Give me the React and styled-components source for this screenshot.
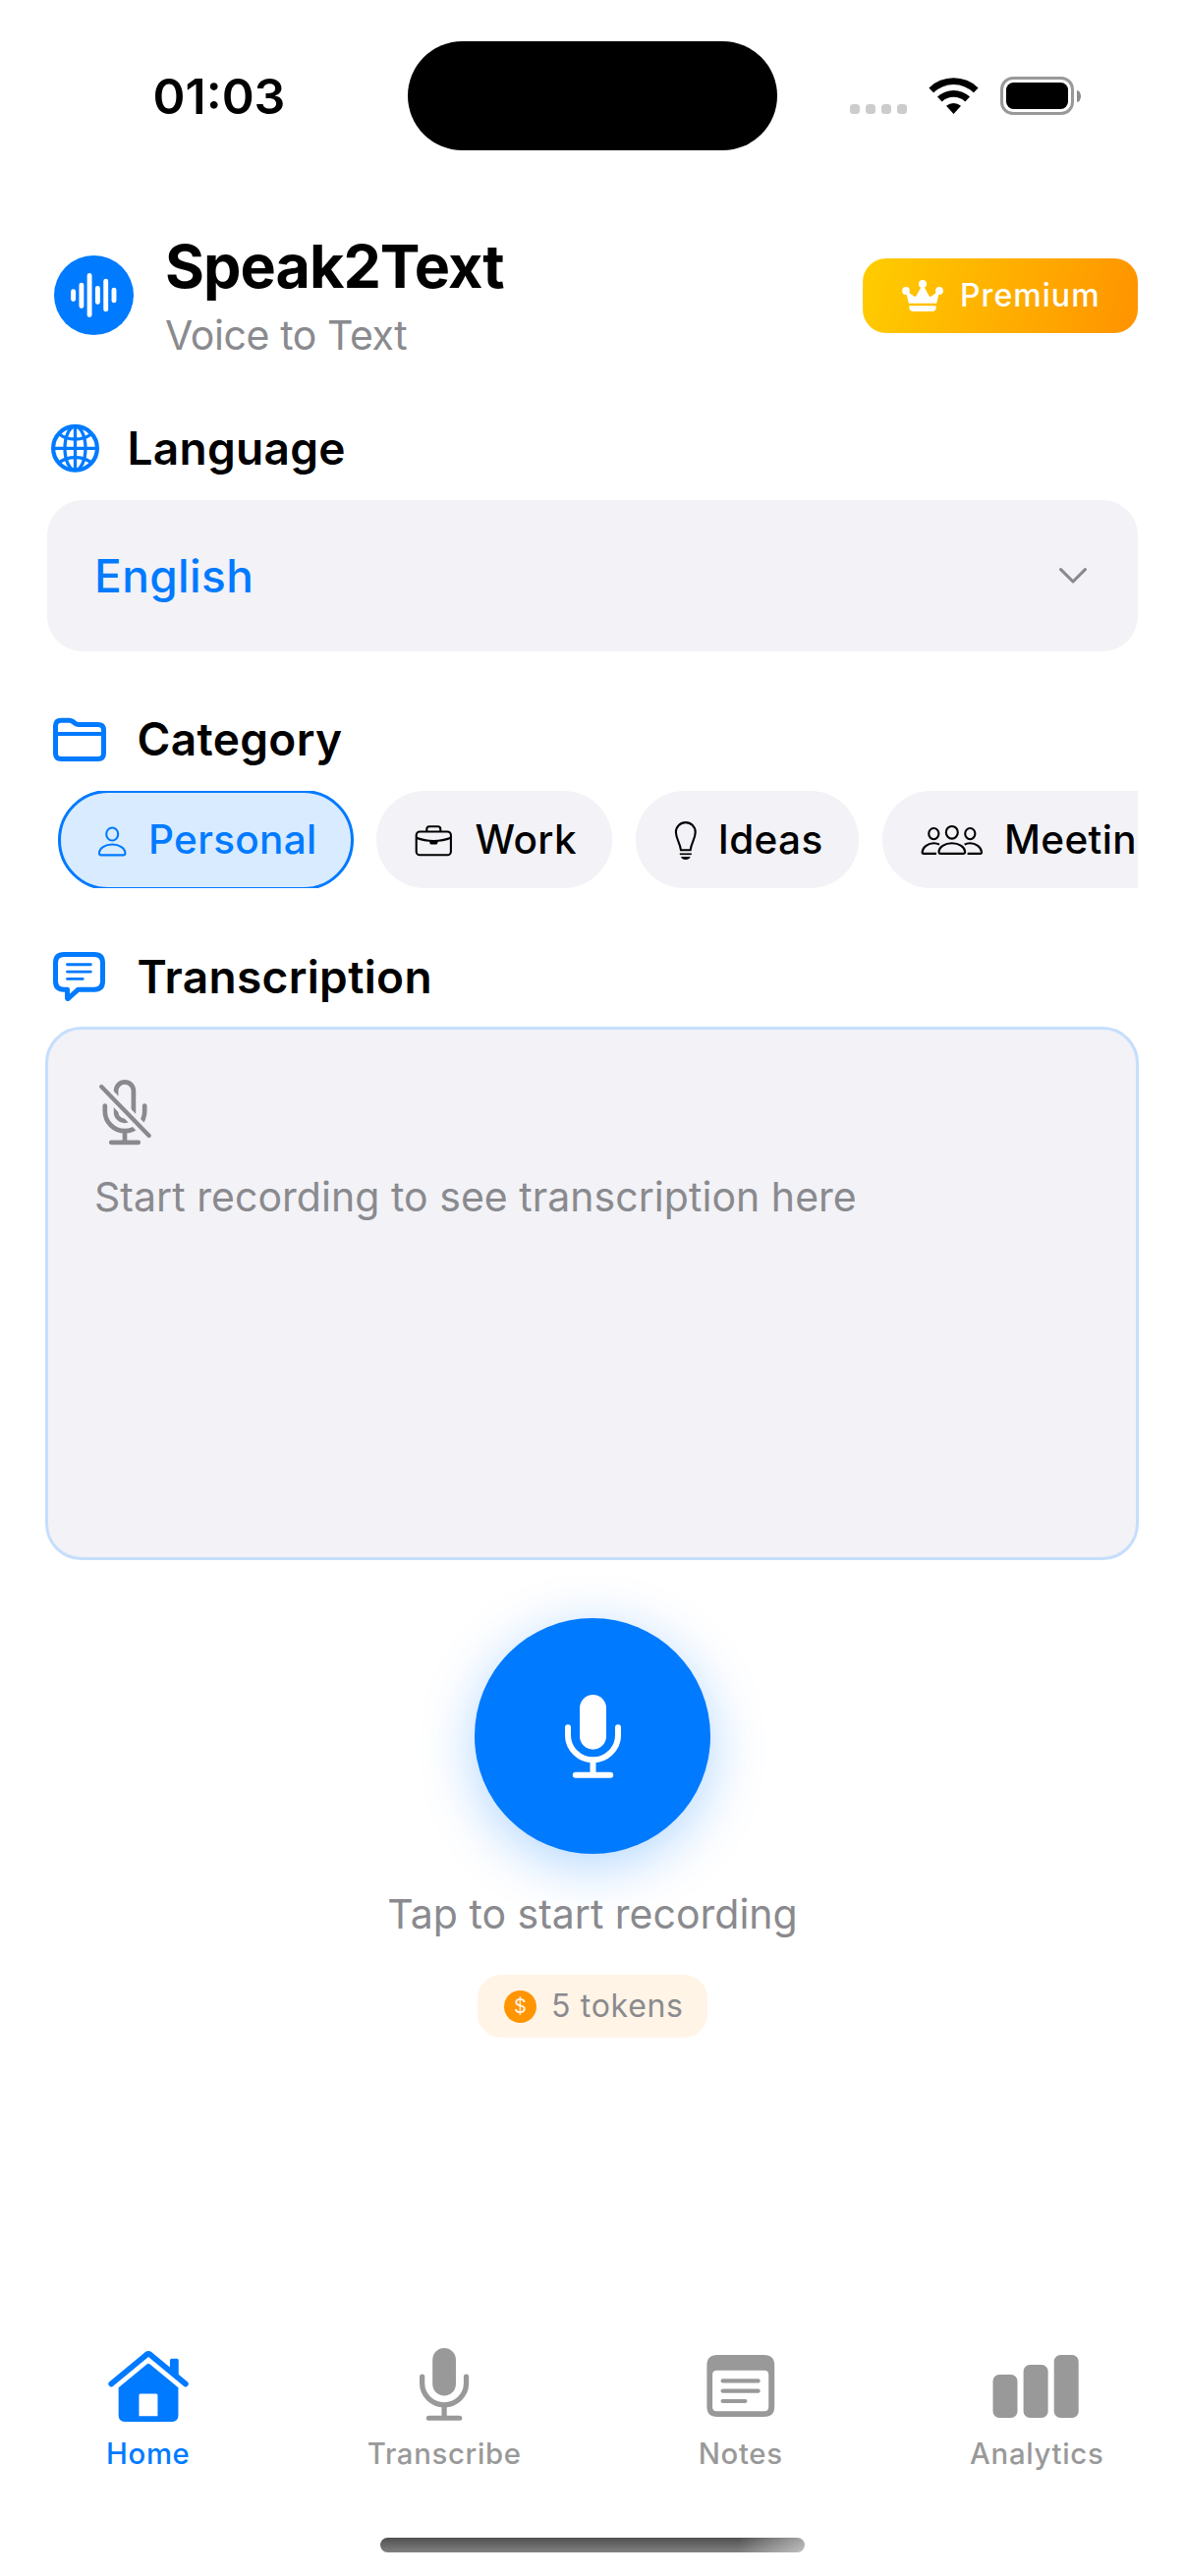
import React from "react";
import styled, { createGlobalStyle, css } from "styled-components";

const color = {
  blue: "#007AFF",
  ink: "#000",
  gray: "#8A8A8E",
  tabGray: "#999999",
  fill: "#F2F2F7",
  orange: "#FF9500",
};

const GlobalStyle = createGlobalStyle`
  *, *::before, *::after { box-sizing: border-box; }
  body { margin: 0; background: #fff; }
  svg { display: block; flex: none; }
`;

const Screen = styled.div`
  width: 1206px;
  height: 2622px;
  display: flex;
  flex-direction: column;
  overflow: hidden;
  background: #fff;
  color: ${color.ink};
  font-family: Inter, "Liberation Sans", sans-serif;
`;

const Text = styled.span`
  display: block;
  margin: 0;
  white-space: nowrap;
  font-size: ${(p) => p.$size}px;
  font-weight: ${(p) => p.$weight || 400};
  line-height: ${(p) => p.$line || 50}px;
  letter-spacing: ${(p) => p.$track || 0}px;
  color: ${(p) => p.$color || "inherit"};
`;

/* Status bar */
const StatusBar = styled.header`
  height: 194px;
  display: grid;
  grid-template-columns: 415px 376px 415px;
  align-items: center;
`;
const Clock = styled.div`
  display: flex;
  justify-content: center;
  padding: 2px 0 0 31px;
`;
const Island = styled.div`
  height: 111px;
  border-radius: 56px;
  background: #000;
`;
const StatusIcons = styled.div`
  display: flex;
  align-items: center;
  padding: 1px 0 0 74px;
`;
const SignalDots = styled.div`
  display: flex;
  gap: 6px;
  padding-top: 27px;
`;
const SignalDot = styled.i`
  width: 10px;
  height: 10px;
  border-radius: 3.5px;
  background: #ccc;
`;
const WifiGlyph = styled.svg`
  margin-left: 22px;
`;
const Battery = styled.div`
  display: flex;
  align-items: center;
  gap: 3px;
  margin-left: 22px;
`;
const BatteryShell = styled.div`
  width: 75px;
  height: 39px;
  padding: 3px;
  border: 3px solid #999;
  border-radius: 13px;
`;
const BatteryLevel = styled.div`
  height: 100%;
  border-radius: 7.5px;
  background: #000;
`;
const BatteryNub = styled.i`
  width: 4px;
  height: 12px;
  border-radius: 0 4px 4px 0 / 0 6px 6px 0;
  background: #8c8c8c;
`;

/* Content */
const Content = styled.main`
  padding: 41.5px 48px 0;
`;
const AppHeader = styled.div`
  height: 130px;
  display: flex;
  align-items: center;
  padding-left: 7px;
`;
const AppBadge = styled.div`
  width: 81px;
  height: 81px;
  border-radius: 50%;
  background: ${color.blue};
`;
const Titles = styled.div`
  display: flex;
  flex-direction: column;
  gap: 8.5px;
  margin-left: 32px;
`;
const PremiumButton = styled.button`
  display: flex;
  align-items: center;
  gap: 17.5px;
  width: 280px;
  height: 76px;
  margin-left: auto;
  padding: 0 0 0 39.5px;
  border: 0;
  border-radius: 24px;
  background: linear-gradient(105deg, #ffcc00 2%, #ff9500 96%);
  color: #fff;
  font-family: inherit;
`;

const Section = styled.section`
  display: flex;
  flex-direction: column;
  gap: 24px;
  margin-top: ${(p) => p.$top}px;
`;
const SectionLabel = styled.div`
  display: flex;
  align-items: center;
  gap: 24.5px;
  height: 58px;
  color: ${color.ink};
`;
const Select = styled.div`
  display: flex;
  align-items: center;
  justify-content: space-between;
  height: 154px;
  padding: 0 52px 0 48px;
  border-radius: 36px;
  background: ${color.fill};
`;

const ChipRow = styled.div`
  display: flex;
  gap: 24px;
  height: 99px;
  padding-left: 12px;
  overflow: hidden;
`;
const Chip = styled.div`
  flex: none;
  display: flex;
  align-items: center;
  height: 99px;
  padding: 0 36px;
  border-radius: 50px;
  background: ${color.fill};
  ${(p) =>
    p.$selected &&
    css`
      height: 102px;
      margin: -1.5px;
      border: 3px solid ${color.blue};
      padding: 0 34.5px;
      border-radius: 51px;
      background: #d9ebff;
      color: ${color.blue};
    `}
`;
const ChipIcon = styled.svg`
  margin-right: 18px;
  fill: none;
  stroke: currentColor;
  stroke-width: 2.1;
`;

const TranscriptBox = styled.div`
  display: flex;
  flex-direction: column;
  gap: 24px;
  height: 543px;
  margin: -2px -1px -1px -2px;
  padding: 47px;
  border: 3px solid #c5defc;
  border-radius: 37px;
  background: ${color.fill};
`;

const Recorder = styled.div`
  display: flex;
  flex-direction: column;
  align-items: center;
  gap: 36px;
  margin-top: 60px;
`;
const RecordButton = styled.button`
  display: flex;
  align-items: center;
  justify-content: center;
  width: 240px;
  height: 240px;
  padding: 0;
  border: 0;
  border-radius: 50%;
  background: ${color.blue};
  color: #fff;
  box-shadow: 0 12px 56px rgba(0, 122, 255, 0.31);
`;
const TokenPill = styled.div`
  display: flex;
  align-items: center;
  gap: 15px;
  width: 234px;
  height: 64px;
  margin-top: 1px;
  padding-left: 27px;
  border-radius: 24px;
  background: #fff4e6;
`;
const Coin = styled.div`
  display: flex;
  justify-content: center;
  width: 33px;
  height: 33px;
  border-radius: 50%;
  background: ${color.orange};
  color: #fff4e6;
`;

/* Tab bar */
const TabBar = styled.nav`
  display: grid;
  grid-template-columns: repeat(4, 1fr);
  margin-top: auto;
`;
const Tab = styled.div`
  display: flex;
  flex-direction: column;
  align-items: center;
  gap: 9.5px;
  color: ${(p) => (p.$active ? color.blue : color.tabGray)};
`;
const HomeIndicator = styled.div`
  width: 432px;
  height: 15px;
  margin: 67.5px auto 24px;
  border-radius: 8px;
  background: linear-gradient(100deg, transparent 84%, rgba(255, 255, 255, 0.5) 100%),
    linear-gradient(#505050, #808080);
`;

/* Icons */
const Wifi = () => (
  <WifiGlyph width="51" height="38" viewBox="0 0 51 38">
    <path d="M0.4 10.4 A36 36 0 0 1 50.6 10.4 L45.9 15.2 A29.5 29.5 0 0 0 5.1 15.2 Z" />
    <path d="M9 19.6 A24 24 0 0 1 42 19.6 L37.3 24.4 A17.4 17.4 0 0 0 13.7 24.4 Z" />
    <path d="M18 28.8 A11.4 11.4 0 0 1 33 28.8 L25.5 37 Z" />
  </WifiGlyph>
);

const waveBars = [
  [19.6, 34.3, 47],
  [27.9, 27.7, 54],
  [36.1, 18, 63],
  [44.4, 31, 50],
  [52.7, 23.7, 57.3],
  [61, 32.7, 48.3],
];
const Waveform = () => (
  <svg width="81" height="81" viewBox="0 0 81 81" stroke="#fff" strokeWidth="4.9" strokeLinecap="round">
    {waveBars.map(([x, top, bottom]) => (
      <line key={x} x1={x} x2={x} y1={top + 2.4} y2={bottom - 2.4} />
    ))}
  </svg>
);

const Crown = () => (
  <svg width="42" height="32" viewBox="0 0 42 32" fill="currentColor">
    <circle cx="21" cy="4.1" r="4" />
    <circle cx="4" cy="11" r="3.9" />
    <circle cx="38" cy="11" r="3.9" />
    <path d="M4.2 13 L6.5 12.5 L12.5 16.8 Q13.6 17.4 14.4 16.2 L19.2 7.5 H22.8 L27.6 16.2 Q28.4 17.4 29.5 16.8 L35.5 12.5 L37.8 13 L35.2 23.7 H6.8 Z" />
    <path d="M7.3 26.2 H34.7 V27.5 Q34.7 32 30.5 32 H11.5 Q7.3 32 7.3 27.5 Z" />
  </svg>
);

const Globe = () => (
  <svg width="57" height="58" viewBox="0 0 57 58" fill="none" stroke={color.blue} strokeWidth="3.3">
    <circle cx="28.5" cy="29.3" r="22.4" strokeWidth="4.2" />
    <ellipse cx="28.5" cy="29.3" rx="10.5" ry="22.2" />
    <path d="M28.5 7 V51.6 M6.2 29.3 H50.8" />
    <path d="M12.3 15 Q19 20 28.5 20 T44.7 15 M12.3 43.6 Q19 38.6 28.5 38.6 T44.7 43.6" />
  </svg>
);

const Folder = () => (
  <svg width="67" height="58" viewBox="0 0 67 58" fill="none" stroke={color.blue} strokeWidth="5" strokeLinejoin="round">
    <path d="M8.5 44 V16 Q8.5 10.2 14.3 10.2 H22 Q24.6 10.2 26.6 11.8 L27.8 12.8 Q29.8 14.5 32.4 14.5 H51.7 Q57.5 14.5 57.5 20.3 V43.8 Q57.5 49.6 51.7 49.6 H14.3 Q8.5 49.6 8.5 43.8 Z" />
    <path d="M8.5 24 H57.5" strokeWidth="4" />
  </svg>
);

const Bubble = () => (
  <svg width="67" height="58" viewBox="0 0 67 58" fill="none" stroke={color.blue} strokeWidth="5" strokeLinejoin="round" strokeLinecap="round">
    <path d="M17 6.6 H48 Q56.5 6.6 56.5 15.1 V33.8 Q56.5 42.2 48 42.2 H31.6 L21.4 51.3 Q20.5 51.9 20.5 50.8 V42.2 H17 Q8.5 42.2 8.5 33.8 V15.1 Q8.5 6.6 17 6.6 Z" />
    <path d="M20.5 16.8 H44.3 M20.5 24.1 H44.3 M20.5 31.4 H36.2" strokeWidth="2.9" />
  </svg>
);

const Chevron = () => (
  <svg width="28" height="16" viewBox="0 0 28 16" fill="none" stroke={color.gray} strokeWidth="3.1" strokeLinecap="round" strokeLinejoin="round">
    <path d="M1.6 1.6 L14 14 L26.4 1.6" />
  </svg>
);

const PersonIcon = () => (
  <ChipIcon width="37" height="34" viewBox="0 0 37 34">
    <ellipse cx="18.2" cy="11" rx="6" ry="6.5" />
    <path d="M5 30.4 C5 25.6 10.8 21.5 18.2 21.5 C25.6 21.5 31.4 25.6 31.4 30.4 Q31.4 32.4 29.4 32.4 H7 Q5 32.4 5 30.4 Z" />
  </ChipIcon>
);

const BriefcaseIcon = () => (
  <ChipIcon width="47" height="36" viewBox="-0.7 0 47 36">
    <rect x="4" y="9.5" width="35.2" height="23.8" rx="3.6" />
    <path d="M14.6 9.5 V6.9 Q14.6 4.3 17.2 4.3 H26 Q28.6 4.3 28.6 6.9 V9.5" />
    <path d="M4 15.8 Q12 19 21.6 19 T39.2 15.8" />
    <path d="M17.6 18.6 H25.8 V20.4 Q25.8 22.6 23.6 22.6 H19.8 Q17.6 22.6 17.6 20.4 Z" fill="currentColor" stroke="none" />
  </ChipIcon>
);

const BulbIcon = () => (
  <ChipIcon width="30" height="44" viewBox="0 0 30 44">
    <path d="M10 32.3 C9 24.4 4.9 20.6 4.9 14 A9.9 9.9 0 0 1 24.7 14 C24.7 20.6 20.6 24.4 19.6 32.3 Z" />
    <path d="M8.8 36.3 H20.8" strokeWidth="1.7" />
    <path d="M10 39 H19.6 Q18.6 42 14.8 42 T10 39 Z" fill="currentColor" stroke="none" />
  </ChipIcon>
);

const GroupIcon = () => (
  <ChipIcon width="70.5" height="36" viewBox="0 0 70.5 36">
    <ellipse cx="34.8" cy="10.3" rx="6" ry="6.3" />
    <ellipse cx="16.3" cy="11.6" rx="5.1" ry="5.6" />
    <ellipse cx="53.3" cy="11.6" rx="5.1" ry="5.6" />
    <path d="M21.5 30 C21.5 25.4 27.4 21.2 34.8 21.2 C42.2 21.2 48.1 25.4 48.1 30 Q48.1 31.9 46.2 31.9 H23.4 Q21.5 31.9 21.5 30 Z" />
    <path d="M19 31.9 H6 Q4.5 31.9 4.6 30.2 C5 25.2 10.6 21.2 16.3 21.2 Q19.6 21.2 22 22.6" />
    <path d="M50.6 31.9 H63.6 Q65.1 31.9 65 30.2 C64.6 25.2 59 21.2 53.3 21.2 Q50 21.2 47.6 22.6" />
  </ChipIcon>
);

const MicSlash = () => (
  <svg width="60" height="74" viewBox="0 0 60 74" fill="none" stroke={color.gray} strokeWidth="4.7" strokeLinecap="round">
    <mask id="slashGap" maskUnits="userSpaceOnUse" x="0" y="0" width="60" height="74">
      <rect width="60" height="74" fill="#fff" stroke="none" />
      <path d="M-4 -0.5 L70 75.7" stroke="#000" strokeWidth="11.5" />
    </mask>
    <g mask="url(#slashGap)">
      <rect x="22.1" y="6.4" width="17.8" height="39.4" rx="8.9" />
      <path d="M10.8 30.6 V36 A20.2 20.2 0 0 0 51.2 36 V30.6" />
    </g>
    <path d="M31 56 V67" />
    <path d="M17.2 67.8 H44.8" />
    <path d="M7.2 11 L55.7 61" strokeWidth="4.3" />
  </svg>
);

const micShape = (
  <>
    <rect x="15" y="0" width="27" height="55.7" rx="13.5" fill="currentColor" />
    <g fill="none" stroke="currentColor" strokeWidth="6" strokeLinecap="round">
      <path d="M3 33.3 V41 A25.5 25.3 0 0 0 54 41 V33.3" />
      <path d="M28.5 67 V80" strokeLinecap="butt" />
      <path d="M10.8 81.7 H46.2" />
    </g>
  </>
);

const Mic = () => (
  <svg width="57" height="85" viewBox="0 0 57 85">
    {micShape}
  </svg>
);

const TabGlyph = ({ children }) => (
  <svg width="90" height="84" viewBox="0 0 90 84" fill="currentColor">
    {children}
  </svg>
);

const HomeGlyph = () => (
  <TabGlyph>
    <g transform="translate(4.25 7)">
      <path d="M3 33.4 L38.9 3.7 Q40.8 2.3 42.7 3.7 L78.6 33.4" fill="none" stroke="currentColor" strokeWidth="5.8" strokeLinecap="round" />
      <path d="M62.7 18.6 V9.4 Q62.7 7.7 64.4 7.7 H69.8 Q71.5 7.7 71.5 9.4 V26 Z" />
      <path
        fillRule="evenodd"
        d="M10.4 37.2 L39.2 13.4 Q40.8 12.2 42.4 13.4 L71.2 37.2 V65.6 Q71.2 72 64.8 72 H16.8 Q10.4 72 10.4 65.6 Z M32.6 43.5 Q31.2 43.5 31.2 45 V66.3 H50.2 V45 Q50.2 43.5 48.8 43.5 Z"
      />
    </g>
  </TabGlyph>
);
const MicGlyph = () => (
  <TabGlyph>
    <g transform="translate(20 4) scale(0.88 0.872)">{micShape}</g>
  </TabGlyph>
);
const NotesGlyph = () => (
  <TabGlyph>
    <g transform="translate(10.4 11)">
      <path
        fillRule="evenodd"
        d="M10.5 0 H58.3 Q68.8 0 68.8 10.5 V52.5 Q68.8 63 58.3 63 H10.5 Q0 63 0 52.5 V10.5 Q0 0 10.5 0 Z M10 15.7 Q5.7 15.7 5.7 20 V53 Q5.7 57.2 10 57.2 H58.5 Q62.8 57.2 62.8 53 V20 Q62.8 15.7 58.5 15.7 Z"
      />
      <path d="M16.2 26.4 H52.2 M16.2 36.7 H52.2 M16.2 47 H39" stroke="currentColor" strokeWidth="4.2" strokeLinecap="round" />
    </g>
  </TabGlyph>
);
const ChartGlyph = () => (
  <TabGlyph>
    <g transform="translate(0.5 11)">
      <rect x="0" y="20" width="25" height="44" rx="6.5" />
      <rect x="31.1" y="10" width="25" height="54" rx="6.5" />
      <rect x="62.2" y="0" width="25" height="64" rx="6.5" />
    </g>
  </TabGlyph>
);

const chips = [
  { label: "Personal", Icon: PersonIcon, selected: true },
  { label: "Work", Icon: BriefcaseIcon },
  { label: "Ideas", Icon: BulbIcon },
  { label: "Meetings", Icon: GroupIcon },
];

const tabs = [
  { label: "Home", Glyph: HomeGlyph, active: true },
  { label: "Transcribe", Glyph: MicGlyph },
  { label: "Notes", Glyph: NotesGlyph },
  { label: "Analytics", Glyph: ChartGlyph },
];

export default function App() {
  return (
    <Screen>
      <GlobalStyle />
      <StatusBar>
        <Clock>
          <Text $size={50} $weight={600} $line={60}>01:03</Text>
        </Clock>
        <Island />
        <StatusIcons>
          <SignalDots>
            <SignalDot />
            <SignalDot />
            <SignalDot />
            <SignalDot />
          </SignalDots>
          <Wifi />
          <Battery>
            <BatteryShell>
              <BatteryLevel />
            </BatteryShell>
            <BatteryNub />
          </Battery>
        </StatusIcons>
      </StatusBar>

      <Content>
        <AppHeader>
          <AppBadge>
            <Waveform />
          </AppBadge>
          <Titles>
            <Text as="h1" $size={61} $weight={700} $line={72} $track={-0.95}>Speak2Text</Text>
            <Text $size={41} $track={-0.4} $color={color.gray}>Voice to Text</Text>
          </Titles>
          <PremiumButton>
            <Crown />
            <Text $size={32} $weight={550} $track={1.05}>Premium</Text>
          </PremiumButton>
        </AppHeader>

        <Section $top={61.5}>
          <SectionLabel>
            <Globe />
            <Text $size={46} $weight={600} $track={0.3}>Language</Text>
          </SectionLabel>
          <Select>
            <Text $size={46} $weight={500} $track={0.4} $color={color.blue}>English</Text>
            <Chevron />
          </Select>
        </Section>

        <Section $top={60}>
          <SectionLabel>
            <Folder />
            <Text $size={46} $weight={600} $track={0.35}>Category</Text>
          </SectionLabel>
          <ChipRow>
            {chips.map(({ label, Icon, selected }) => (
              <Chip key={label} $selected={selected}>
                <Icon />
                <Text $size={40.5} $weight={500} $track={0.32}>{label}</Text>
              </Chip>
            ))}
          </ChipRow>
        </Section>

        <Section $top={61}>
          <SectionLabel>
            <Bubble />
            <Text $size={46} $weight={600} $track={0.33}>Transcription</Text>
          </SectionLabel>
          <TranscriptBox>
            <MicSlash />
            <Text $size={41} $track={0.04} $color={color.gray}>Start recording to see transcription here</Text>
          </TranscriptBox>
        </Section>

        <Recorder>
          <RecordButton>
            <Mic />
          </RecordButton>
          <Text $size={41} $color={color.gray}>Tap to start recording</Text>
          <TokenPill>
            <Coin>
              <Text $size={20} $line={33}>$</Text>
            </Coin>
            <Text $size={32} $track={0.7} $color={color.gray}>5 tokens</Text>
          </TokenPill>
        </Recorder>
      </Content>

      <TabBar>
        {tabs.map(({ label, Glyph, active }) => (
          <Tab key={label} $active={active}>
            <Glyph />
            <Text $size={29.3} $weight={500} $line={36} $track={0.7}>{label}</Text>
          </Tab>
        ))}
      </TabBar>
      <HomeIndicator />
    </Screen>
  );
}
